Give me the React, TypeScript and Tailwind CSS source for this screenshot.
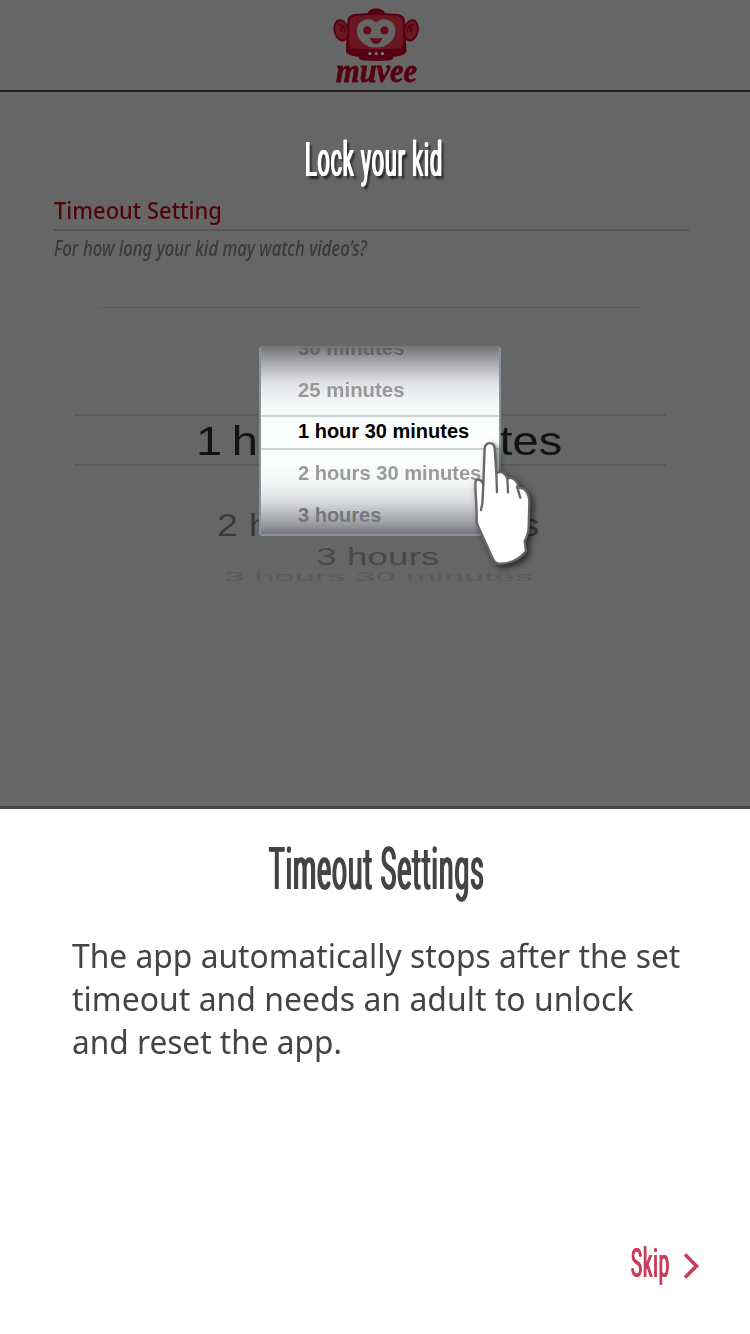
import { useLayoutEffect, useRef, useState } from "react";

type FitProps = { width: number; className: string; children: string };

/** One line of text condensed or widened horizontally to an exact width. */
function Fit({ width, className, children }: FitProps) {
  const ref = useRef<HTMLSpanElement>(null);
  const [scale, setScale] = useState(1);
  useLayoutEffect(() => {
    if (ref.current) setScale(width / ref.current.offsetWidth);
  }, [width, children]);
  return (
    <div className={`whitespace-nowrap ${className}`} style={{ width }}>
      <span
        ref={ref}
        className="inline-block origin-left"
        style={{ transform: `scaleX(${scale})` }}
      >
        {children}
      </span>
    </div>
  );
}

function Monkey() {
  return (
    <svg viewBox="40 20 262 165" className="h-[55px] w-[87px] shrink-0">
      <g fill="#560012">
        <path d="M143 42C147 28 157 24 170 24s24 4 28 18z" />
        <ellipse cx="65" cy="90" rx="23" ry="34" transform="rotate(-12 65 90)" />
        <ellipse cx="275" cy="90" rx="23" ry="34" transform="rotate(12 275 90)" />
        <path d="M104 41Q170 34 236 41Q255 43 257 64L261 148Q262 162 246 166L222 170Q222 180 207 181Q170 183 133 181Q118 180 118 170L94 166Q78 162 79 148L83 64Q85 43 104 41Z" />
      </g>
      <g fill="#6c1824">
        <ellipse cx="65" cy="89" rx="18" ry="28" transform="rotate(-12 65 89)" />
        <ellipse cx="275" cy="89" rx="18" ry="28" transform="rotate(12 275 89)" />
        <path d="M108 47Q170 41 232 47Q249 49 250 66L252 128Q252 142 237 144Q170 150 103 144Q88 142 88 128L90 66Q91 49 108 47Z" />
      </g>
      <g fill="none" stroke="#560012" strokeWidth="5" strokeLinecap="round">
        <path d="M57 72Q72 71 77 91M67 76Q61 83 67 94" />
        <path d="M283 72Q268 71 263 91M273 76Q279 83 273 94" />
      </g>
      <path
        d="M170 67C157 49 113 53 112 91C112 120 139 142 170 142S228 120 228 91C227 53 183 49 170 67Z"
        fill="#666"
      />
      <circle cx="143" cy="90" r="12.5" fill="#640e1b" />
      <circle cx="195" cy="90" r="12.5" fill="#640e1b" />
      <path d="M152 112Q170 117 188 112Q186 130 170 131Q154 130 152 112Z" fill="#640e1b" />
      <circle cx="151" cy="160" r="5" fill="#777" />
      <circle cx="170" cy="160" r="5" fill="#777" />
      <circle cx="189" cy="160" r="5" fill="#777" />
    </svg>
  );
}

function Hand() {
  return (
    <svg
      viewBox="210 324 192 396"
      className="absolute top-[92px] left-[211px] h-[132px] w-[64px] overflow-visible drop-shadow-[3px_3px_3px_rgba(0,0,0,0.6)]"
    >
      <g stroke="#666" strokeWidth="7" strokeLinecap="round" strokeLinejoin="round">
        <path
          fill="#fff"
          d="M228 450C222 465 231 510 230 565Q229 577 235 590L278 685Q285 701 296 701C325 703 357 690 378 664L374 634Q386 610 386 590L388 515C387 488 374 472 357 474C352 450 334 438 322 446C316 427 302 422 289 430L284 355C282 334 257 334 254 355L250 463C246 452 237 446 228 450Z"
        />
        <path
          fill="none"
          d="M250 463L247 520L243 540M289 430L291 487M322 446L324 487M351 470L361 503"
        />
      </g>
    </svg>
  );
}

function Popup() {
  const row = "h-[41.7px] shrink-0 font-bold text-[20px] leading-[41.7px]";
  return (
    <div className="absolute top-[346px] left-[259px] h-[190px] w-[242px] font-['Liberation_Sans',sans-serif]">
      <div className="relative flex h-full flex-col overflow-hidden rounded-[3px] border-2 border-[#84959b] border-t-[#75787d] border-b-[#8b9397] bg-[linear-gradient(to_bottom,#77777c_0%,#a9a9ae_8%,#dedfe2_18%,#f6f8f8_30%,#fcfefd_40%,#fcfefd_60%,#f5f7f7_72%,#dcdde0_82%,#a5a6aa_93%,#77787d_100%)] pl-[37px]">
        <div className="-mt-[20px] flex flex-col">
          <Fit width={106} className={`${row} text-[#626266]`}>30 minutes</Fit>
          <Fit width={106} className={`${row} text-[#979899]`}>25 minutes</Fit>
          <Fit width={171} className={`${row} text-black`}>1 hour 30 minutes</Fit>
          <Fit width={183} className={`${row} text-[#999a9b]`}>2 hours 30 minutes</Fit>
          <Fit width={83} className={`${row} text-[#75767a]`}>3 houres</Fit>
        </div>
        <div className="absolute inset-x-0 top-[67px] h-[35px] border-y-2 border-[#cfd2d2]" />
      </div>
      <Hand />
    </div>
  );
}

export default function App() {
  return (
    <main className="flex h-[1334px] w-[750px] flex-col overflow-hidden bg-white">
      <section className="relative flex h-[809px] shrink-0 flex-col border-b-[3px] border-[#444] bg-[#666]">
        <header className="flex h-[92px] shrink-0 flex-col items-center border-b-2 border-[#202222] pt-[7px] pl-[2px]">
          <div className="flex flex-col items-center">
            <Monkey />
            <Fit
              width={81}
              className="-mt-[8px] h-[34px] font-['Liberation_Serif',serif] text-[33px] leading-[34px] font-bold text-[#560012] italic [-webkit-text-stroke:0.8px_#560012]"
            >
              muvee
            </Fit>
          </div>
        </header>

        <div className="flex h-[104px] shrink-0 justify-center pt-[38px] pr-[4px]">
          <Fit
            width={138}
            className="ml-px h-[60px] font-[Roboto,sans-serif] text-[47.5px] leading-[60px] font-normal tracking-[2px] text-white [text-shadow:1.5px_0_0_#fff,-1.5px_0_0_#fff,6px_3px_3px_rgba(0,0,0,0.65)]"
          >
            Lock your kid
          </Fit>
        </div>

        <div className="mx-[54px] flex w-[635px] shrink-0 flex-col">
          <Fit
            width={168}
            className="h-[33px] font-['Noto_Sans',sans-serif] text-[23px] leading-[28px] font-medium text-[#500508]"
          >
            Timeout Setting
          </Fit>
          <div className="h-[2px] bg-[#555]" />
          <Fit
            width={313}
            className="h-[36px] font-['Noto_Sans',sans-serif] text-[21.5px] leading-[33px] font-medium text-[#3a3a3a] italic"
          >
            For how long your kid may watch video’s?
          </Fit>
        </div>

        <div className="flex shrink-0 flex-col items-center font-['Liberation_Sans',sans-serif]">
          <div className="mt-[40px] mr-[12px] h-px w-[542px] bg-[#5c5c5c]" />
          <div className="mt-[106px] mr-[10px] flex h-[52px] w-[592px] justify-center border-y-2 border-[#5a5a5a]">
            <Fit width={366} className="ml-[17px] h-[48px] text-[41px] leading-[51px] [word-spacing:-3px] text-[#131313]">
              1 hour 30 minutes
            </Fit>
          </div>
          <Fit width={323} className="mt-[42px] ml-[7px] h-[36px] text-[31px] leading-[36px] text-[#3a3a3a]">
            2 hours 30 minutes
          </Fit>
          <Fit width={124} className="ml-[6px] h-[26px] text-[23px] leading-[27px] text-[#484848]">
            3 hours
          </Fit>
          <Fit width={310} className="ml-[7px] h-[14px] text-[13px] leading-[14px] text-[#5a5a5a]">
            3 hours 30 minutes
          </Fit>
        </div>

        <Popup />
      </section>

      <section className="flex flex-1 flex-col">
        <div className="flex justify-center pt-[22px] pl-[3px]">
          <Fit
            width={216}
            className="h-[75px] font-[Roboto,sans-serif] text-[60px] leading-[76px] font-normal tracking-[2.5px] text-[#444] [text-shadow:1.8px_0_0_#444,-1.8px_0_0_#444]"
          >
            Timeout Settings
          </Fit>
        </div>
        <div className="mt-[28px] ml-[72px] font-['Noto_Sans',sans-serif] text-[33.5px] leading-[43px] text-[#444]">
          <Fit width={608} className="h-[43px]">The app automatically stops after the set</Fit>
          <Fit width={562} className="h-[43px]">timeout and needs an adult to unlock</Fit>
          <Fit width={270} className="h-[43px]">and reset the app.</Fit>
        </div>
        <button className="mt-auto mr-[50px] mb-[45px] flex items-center gap-[13px] self-end">
          <Fit
            width={39}
            className="-mt-[6px] h-[52px] font-[Roboto,sans-serif] text-[41px] leading-[52px] font-normal tracking-[2px] text-[#c93c5c] [text-shadow:1.2px_0_0_#c93c5c,-1.2px_0_0_#c93c5c]"
          >
            Skip
          </Fit>
          <svg viewBox="0 0 17 26" className="h-[26px] w-[17px]">
            <path d="M2 1.5L13.5 13L2 24.5" fill="none" stroke="#c93c5c" strokeWidth="3.6" />
          </svg>
        </button>
      </section>
    </main>
  );
}
